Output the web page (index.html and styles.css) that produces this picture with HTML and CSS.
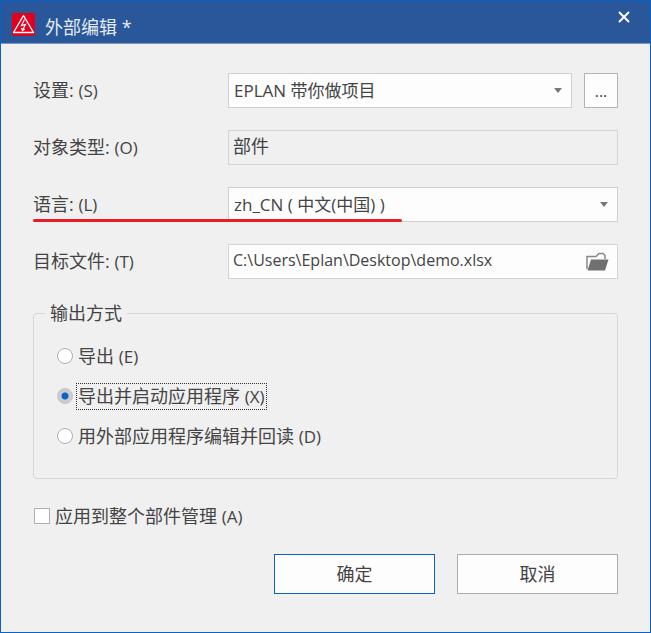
FILE: index.html
```html
<!doctype html>
<html lang="zh-CN">
  <head>
    <meta charset="utf-8">
    <meta name="viewport" content="width=device-width, initial-scale=1">
    <title>外部编辑</title>
    <link rel="stylesheet" href="styles.css">
  </head>
  <body>
    <div class="dialog">
      <header class="titlebar">
        <svg class="logo" viewBox="0 0 23 23" aria-hidden="true">
          <rect width="23" height="23" rx="2" fill="#e2001f"/>
          <path d="M11.5 2.5L21.5 19.5H1.5Z" fill="none" stroke="#fff" stroke-width="1.4" stroke-linejoin="round"/>
          <path d="M12.5 6.5L9.5 12.5L13.5 11.5L10.5 17M9.5 15L10.5 17.5L12.8 16" fill="none" stroke="#fff" stroke-width="1.2"/>
        </svg>
        <h1>外部编辑 *</h1>
        <button type="button" class="close" aria-label="关闭">
          <svg viewBox="0 0 12 12"><path d="M1 1L11 11M11 1L1 11" stroke="#fff" stroke-width="2"/></svg>
        </button>
      </header>
      <form class="content">
        <div class="row">
          <label for="scheme">设置: <span class="key">(S)</span></label>
          <div class="field">
            <div class="combo">
              <select id="scheme"><option>EPLAN 带你做项目</option></select>
              <svg class="arrow" viewBox="0 0 8 5"><path d="M0 0H8L4 5Z"/></svg>
            </div>
            <button type="button" class="more">...</button>
          </div>
        </div>
        <div class="row">
          <label for="type">对象类型: <span class="key">(O)</span></label>
          <div class="field"><input id="type" class="text readonly" value="部件" readonly></div>
        </div>
        <div class="row marked">
          <label for="lang">语言: <span class="key">(L)</span></label>
          <div class="field">
            <div class="combo">
              <select id="lang"><option>zh_CN ( 中文(中国) )</option></select>
              <svg class="arrow" viewBox="0 0 8 5"><path d="M0 0H8L4 5Z"/></svg>
            </div>
          </div>
        </div>
        <div class="row">
          <label for="file">目标文件: <span class="key">(T)</span></label>
          <div class="field filebox">
            <input id="file" class="text path" value="C:\Users\Eplan\Desktop\demo.xlsx">
            <button type="button" class="browse" aria-label="浏览">
              <svg viewBox="0 0 23 19">
                <path d="M1 17V4.500H10L13 1.500H17L19 3.500V7" fill="none" stroke="#888" stroke-width="1.500"/>
                <path d="M5 7.500H22.500L19 18.500H1.500Z" fill="#707070"/>
              </svg>
            </button>
          </div>
        </div>

        <fieldset>
          <legend>输出方式</legend>
          <label class="option"><input type="radio" name="mode"><span class="caption">导出 <span class="key">(E)</span></span></label>
          <label class="option"><input type="radio" name="mode" checked><span class="caption">导出并启动应用程序 <span class="key">(X)</span></span></label>
          <label class="option"><input type="radio" name="mode"><span class="caption">用外部应用程序编辑并回读 <span class="key">(D)</span></span></label>
        </fieldset>

        <label class="option apply"><input type="checkbox"><span class="caption">应用到整个部件管理 <span class="key">(A)</span></span></label>

        <div class="buttons">
          <button type="submit" class="default">确定</button>
          <button type="button">取消</button>
        </div>
      </form>
    </div>
  </body>
</html>
```

FILE: styles.css
```css
* {
  box-sizing: border-box;
}
body {
  margin: 0;
  color: #444;
  background: #f0f0f0;
}
body, input, select, button {
  font-family: "Open Sans", "Noto Sans CJK SC", sans-serif;
  font-size: 18px;
  line-height: 24px;
}
input, select, button {
  margin: 0;
  color: inherit;
  border-radius: 0;
}
.dialog {
  min-height: 100vh;
  border: 1px solid #0a62c9;
}

/* title bar */
.titlebar {
  display: flex;
  align-items: flex-start;
  height: 43px;
  padding: 0 18px 0 11px;
  color: #e4ebf5;
  background: #2a579a;
  border-bottom: 1px solid #7d97c2;
}
.logo {
  width: 23px;
  height: 23px;
  margin-top: 12px;
}
.titlebar h1 {
  flex: 1;
  margin: 14px 0 0 10px;
  font-size: 18px;
  font-weight: normal;
}
.close {
  display: flex;
  padding: 10px 2px;
  border: 0;
  background: none;
}
.close svg {
  width: 12px;
  height: 12px;
}

/* form rows */
.content {
  display: flex;
  flex-direction: column;
  gap: 22px;
  padding: 29px 32px 36px;
}
.row {
  position: relative;
  display: grid;
  grid-template-columns: 195px 1fr;
  align-items: center;
}
.key {
  font-size: 17px;
}
.field {
  display: flex;
  gap: 12px;
  height: 35px;
}
.combo {
  display: grid;
  flex: 1;
  align-items: center;
}
.combo select, .combo .arrow {
  grid-area: 1 / 1;
}
.combo select {
  width: 100%;
  height: 35px;
  padding: 0 24px 0 5px;
  font-size: 17px;
  border: 1px solid #cfcfcf;
  background: #fdfdfd;
  appearance: none;
}
.arrow {
  justify-self: end;
  width: 8px;
  height: 5px;
  margin-right: 10px;
  fill: #777;
  pointer-events: none;
}
.more {
  width: 34px;
  padding: 0;
  font-size: 16px;
  border: 1px solid #b4b4b4;
  background: #fdfdfd;
}
.text {
  flex: 1;
  min-width: 0;
  padding: 0 4px 4px;
  border: 1px solid #d4d4d4;
  background: #fdfdfd;
}
.readonly {
  background: #f0f0f0;
}
.filebox {
  gap: 0;
  border: 1px solid #d4d4d4;
  background: #fdfdfd;
}
.path {
  font-size: 16px;
  border: 0;
}
.browse {
  display: flex;
  align-items: center;
  padding: 0 8px;
  border: 0;
  background: none;
}
.browse svg {
  width: 23px;
  height: 19px;
}

/* red underline drawn over the label and the field */
.marked::after {
  content: "";
  position: absolute;
  bottom: 0;
  left: 0;
  width: 63%;
  height: 3px;
  border-radius: 2px;
  background: #ed1c24;
}

/* options */
fieldset {
  display: flex;
  flex-direction: column;
  gap: 14px;
  min-width: 0;
  margin: 0;
  padding: 18px 23px 29px;
  border: 1px solid #d6d6d6;
  border-radius: 4px;
}
legend {
  margin-left: -12px;
  padding: 0 5px;
}
.option {
  display: flex;
  align-items: center;
  align-self: flex-start;
  gap: 3px;
  height: 26px;
}
.option input {
  flex: none;
  width: 16px;
  height: 16px;
  border: 1px solid #b0b0b0;
  background: #fff;
  appearance: none;
}
.option input[type=radio] {
  border-radius: 50%;
}
.option input[type=radio]:checked {
  border-color: #c4c4c4;
  background: radial-gradient(circle, #0a62c9 3px, #cdcdcd 4px);
}
.caption {
  padding: 0 1px;
  border: 1px solid transparent;
}
input[type=radio]:checked + .caption {
  border: 1px dotted #333;
}
.apply {
  margin: 2px 0 0 1px;
}

.buttons {
  display: flex;
  justify-content: flex-end;
  gap: 22px;
  margin-top: 3px;
}
.buttons button {
  width: 161px;
  height: 40px;
  padding: 0;
  border: 1px solid #adadad;
  background: #fdfdfd;
}
.buttons .default {
  border-color: #0a62c9;
}
```
